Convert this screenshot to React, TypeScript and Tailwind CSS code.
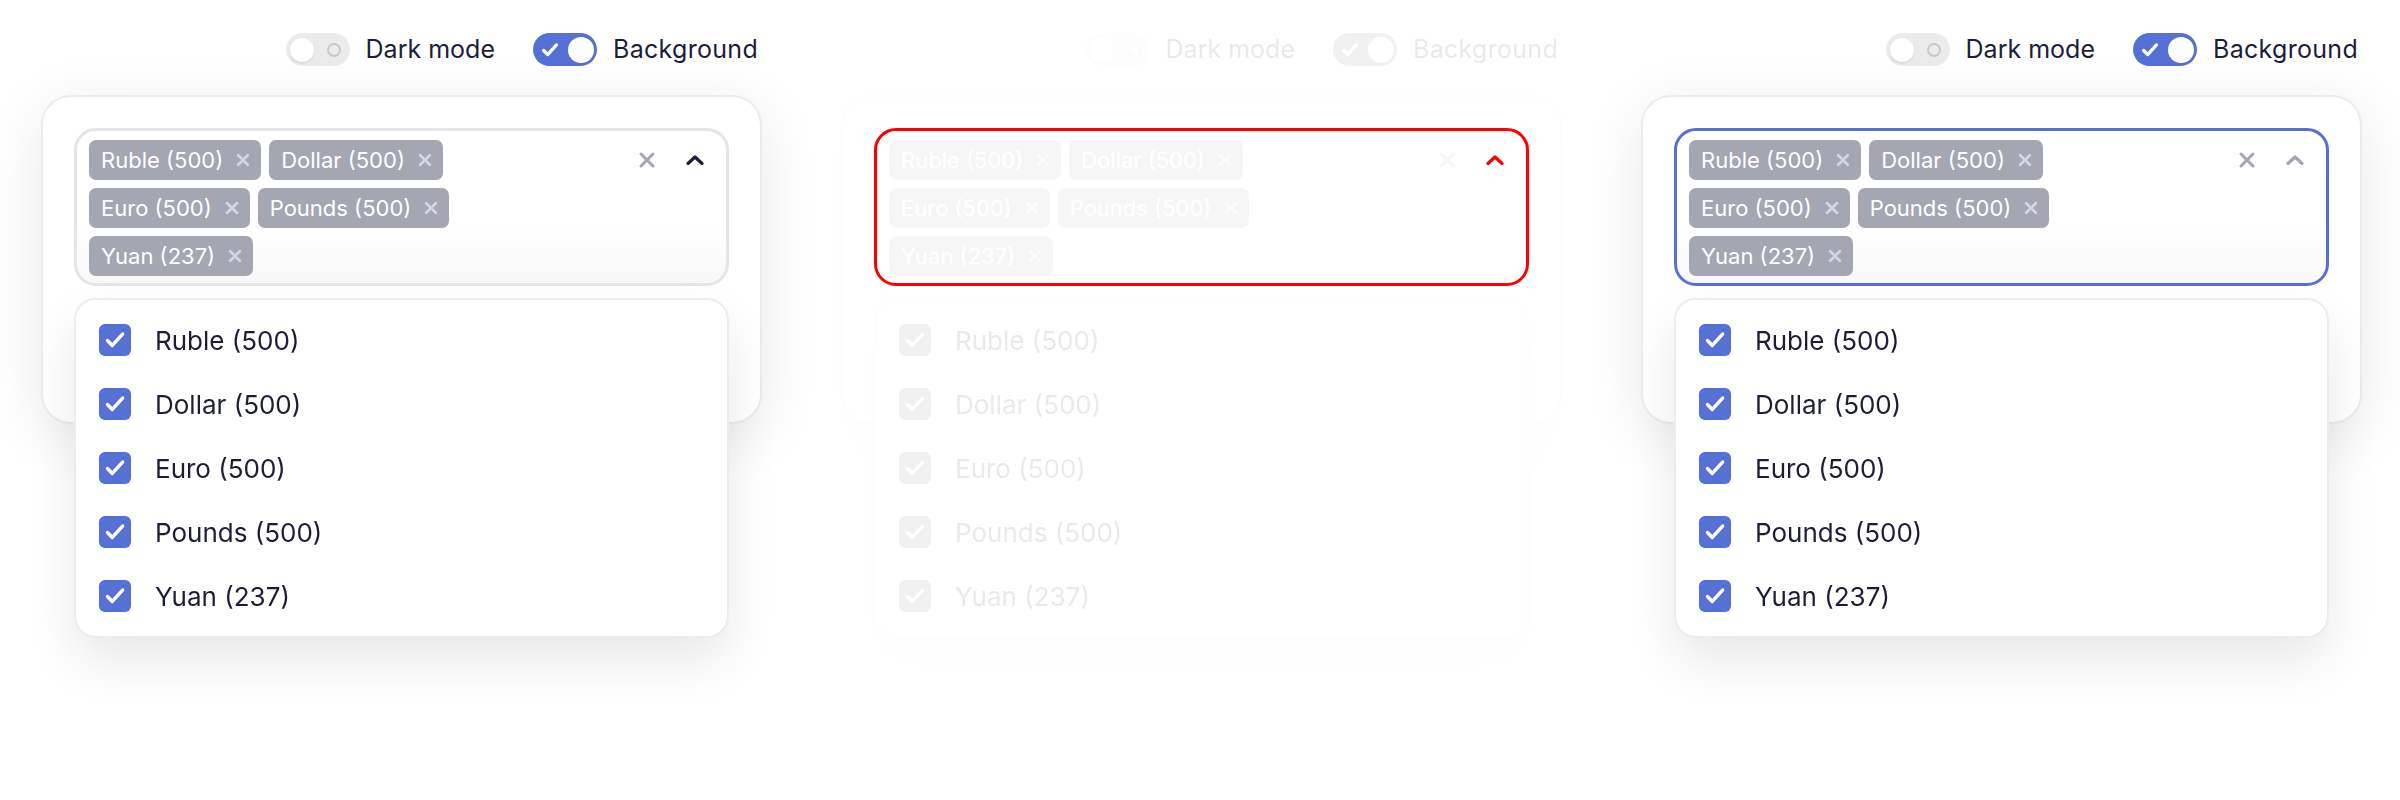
import React from 'react';

const currencies = ['Ruble (500)', 'Dollar (500)', 'Euro (500)', 'Pounds (500)', 'Yuan (237)'];

type Mode = 'normal' | 'focus' | 'outline';

function Check({ className, width = 3.4 }: { className?: string; width?: number }) {
  return (
    <svg viewBox="0 0 24 24" fill="none" stroke="currentColor" strokeWidth={width} strokeLinecap="round" strokeLinejoin="round" className={className}>
      <path d="M5 12.5l4.5 4.5L19 6.5" />
    </svg>
  );
}

function Cross({ className, width = 3 }: { className?: string; width?: number }) {
  return (
    <svg viewBox="0 0 20 20" fill="none" stroke="currentColor" strokeWidth={width} strokeLinecap="round" className={className}>
      <path d="M4 4l12 12M16 4L4 16" />
    </svg>
  );
}

function ChevronUp({ className }: { className?: string }) {
  return (
    <svg viewBox="0 0 20 10" fill="none" stroke="currentColor" strokeWidth={3.2} strokeLinecap="round" strokeLinejoin="round" className={className}>
      <path d="M3 8.5L10 2l7 6.5" />
    </svg>
  );
}

function Toggle({ on }: { on: boolean }) {
  if (on) {
    return (
      <div className="flex h-[33px] w-16 items-center justify-between rounded-full bg-[#5571d6] pl-[6px] pr-[3px]">
        <Check className="h-[22px] w-[22px] text-white" width={3.6} />
        <div className="h-[26px] w-[26px] rounded-full bg-white" />
      </div>
    );
  }
  return (
    <div className="flex h-[33px] w-16 items-center justify-between rounded-full bg-[#ebebec] pl-[4px] pr-[9px]">
      <div className="h-[24px] w-[24px] rounded-full bg-white shadow-[0_1px_2px_rgba(0,0,0,0.12)]" />
      <div className="h-[14px] w-[14px] rounded-full border-2 border-[#c9c9cc]" />
    </div>
  );
}

function Chip({ label }: { label: string }) {
  return (
    <div className="flex h-10 items-center gap-3 rounded-[7px] bg-[#a4a6b1] pl-3 pr-[10px] text-[22px] text-white">
      <span>{label}</span>
      <Cross className="h-4 w-4 text-[#d6d7dc]" width={3.4} />
    </div>
  );
}

function Panel({ mode }: { mode: Mode }) {
  const outline = mode === 'outline';
  const border =
    mode === 'focus' ? 'border-[#5571d6]' : outline ? 'border-[#ff0000]' : 'border-[#e5e5e7]';
  const chevron =
    mode === 'focus' ? 'text-[#a4a6b1]' : outline ? 'text-[#ff0000]' : 'text-[#1b1d3a]';

  return (
    <div className={`flex w-[800px] flex-col pl-[41px] pr-[38px] pt-[33px] ${outline ? 'invisible' : ''}`}>
      <div className="flex h-[33px] items-center justify-end gap-[38px] pr-1 text-[25px] leading-[33px] text-[#1b1d3a]">
        <div className="flex items-center gap-4">
          <Toggle on={false} />
          <span>Dark mode</span>
        </div>
        <div className="flex items-center gap-4">
          <Toggle on />
          <span className="tracking-[0.3px]">Background</span>
        </div>
      </div>

      <div className="mt-[29px] h-[329px] rounded-[30px] border-2 border-[#ececee] bg-white p-[31px] shadow-[0_12px_60px_rgba(0,0,0,0.09)]">
        <div className="relative">
          <div
            className={`flex items-start rounded-[22px] border-[3px] ${border} pb-[7px] pl-3 pr-[21px] pt-[9px] ${
              outline ? 'visible bg-transparent' : 'bg-gradient-to-b from-white from-60% to-[#f8f8f9]'
            }`}
          >
            <div className={`flex max-w-[490px] flex-1 flex-wrap gap-2 ${outline ? 'invisible' : ''}`}>
              {currencies.map((c) => (
                <Chip key={c} label={c} />
              ))}
            </div>
            <div className="ml-auto flex h-10 items-center gap-7">
              <Cross className={`h-5 w-5 text-[#a4a6b1] ${outline ? 'invisible' : ''}`} width={3} />
              <ChevronUp className={`h-[10px] w-5 ${chevron}`} />
            </div>
          </div>

          <div className="absolute left-0 right-0 top-full z-10 mt-3 rounded-[22px] border-2 border-[#ececee] bg-white py-2 shadow-[0_24px_50px_rgba(0,0,0,0.09)]">
            {currencies.map((c) => (
              <div key={c} className="flex h-16 items-center gap-6 pl-[23px] text-[26px] text-[#1b1d3a]">
                <div className="flex h-8 w-8 items-center justify-center rounded-[6px] bg-[#5571d6]">
                  <Check className="h-[26px] w-[26px] text-white" width={3.2} />
                </div>
                <span>{c}</span>
              </div>
            ))}
          </div>
        </div>
      </div>
    </div>
  );
}

export default function App() {
  return (
    <div className="flex h-[800px] w-[2400px] bg-white font-['Inter','Noto_Sans',sans-serif]">
      <Panel mode="normal" />
      <div className="grid">
        <div className="opacity-10 grayscale [grid-area:1/1]">
          <Panel mode="normal" />
        </div>
        <div className="[grid-area:1/1]">
          <Panel mode="outline" />
        </div>
      </div>
      <Panel mode="focus" />
    </div>
  );
}
